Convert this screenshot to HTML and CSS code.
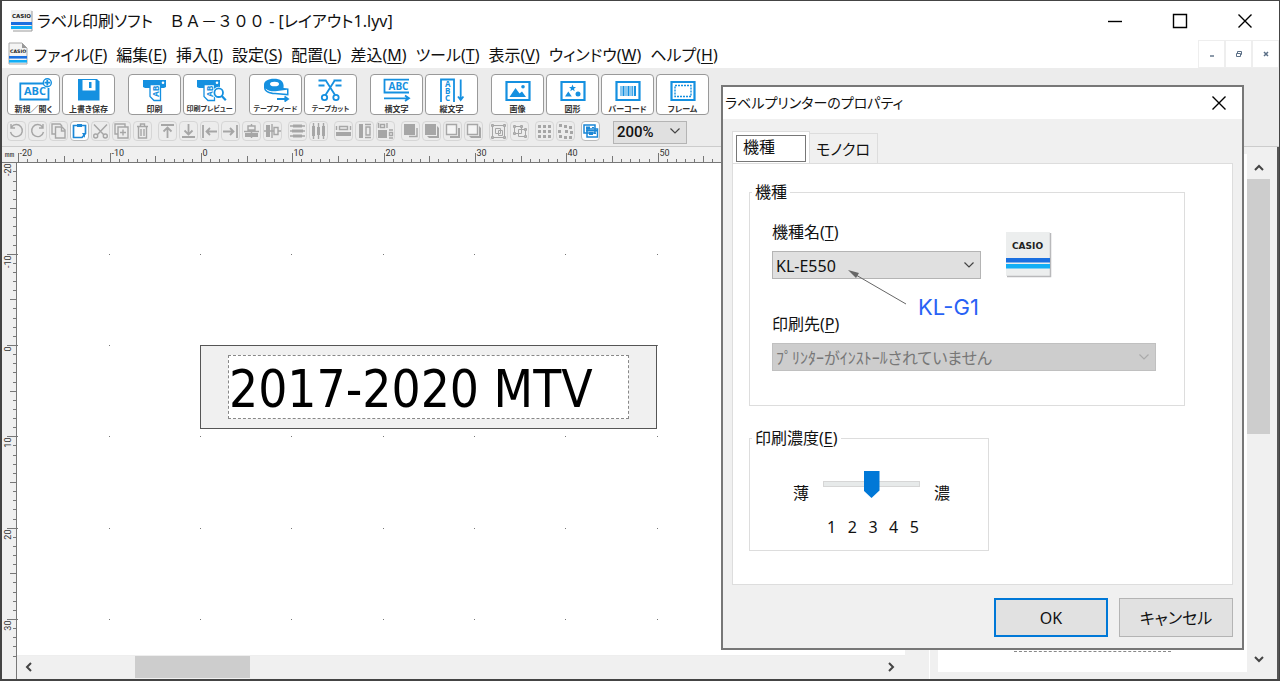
FILE: index.html
```html
<!DOCTYPE html>
<html lang="ja">
<head>
<meta charset="utf-8">
<title>ラベル印刷ソフト</title>
<link rel="stylesheet" href="styles.css">
</head>
<body>
<div class="window">
  <header class="titlebar">
    <svg class="app-icon" width="22" height="22" viewBox="0 0 22 22"><path d="M0 0h21v20H0z" fill="#f1f2f2"/><path d="M21 1v20H2" fill="none" stroke="#999"/><text x="1" y="8" class="logo-text" font-size="5.500">CASIO</text><path d="M0 12h21v3H0z" fill="#1a6fe0"/><path d="M0 16h21v3H0z" fill="#12aef5"/></svg>
    <h1 class="title">ラベル印刷ソフト<span class="wide-text">　ＢＡ－３００</span> - [レイアウト1.lyv]</h1>
    <div class="window-controls">
      <button class="wc" aria-label="最小化"><svg width="16" height="16"><path d="M1 8.500h14" stroke="#000" stroke-width="1.400"/></svg></button>
      <button class="wc" aria-label="最大化"><svg width="16" height="16"><path d="M1.500 1.500h13v13h-13z" fill="none" stroke="#000" stroke-width="1.400"/></svg></button>
      <button class="wc" aria-label="閉じる"><svg width="16" height="16"><path d="M1.500 1.500l13 13M14.500 1.500l-13 13" stroke="#000" stroke-width="1.400"/></svg></button>
    </div>
  </header>

  <nav class="menubar">
    <svg class="doc-icon" width="20" height="24" viewBox="0 0 20 24"><path d="M1 1h13l5 5v16H1z" fill="#f4f4f4" stroke="#aaa"/><path d="M14 1v5h5z" fill="#999"/><text x="2" y="11" class="logo-text" font-size="4.700">CASIO</text><path d="M1 14h18v2.600H1z" fill="#1a6fe0"/><path d="M1 18h18v2.600H1z" fill="#12aef5"/></svg>
    <button class="menu">ファイル(<u>F</u>)</button>
    <button class="menu">編集(<u>E</u>)</button>
    <button class="menu">挿入(<u>I</u>)</button>
    <button class="menu">設定(<u>S</u>)</button>
    <button class="menu">配置(<u>L</u>)</button>
    <button class="menu">差込(<u>M</u>)</button>
    <button class="menu">ツール(<u>T</u>)</button>
    <button class="menu">表示(<u>V</u>)</button>
    <button class="menu">ウィンドウ(<u>W</u>)</button>
    <button class="menu">ヘルプ(<u>H</u>)</button>
    <div class="mdi-controls">
      <button class="mdi" aria-label="最小化"><svg width="8" height="8"><path d="M2 6h4" stroke="#5b6f86" stroke-width="1.400"/></svg></button>
      <button class="mdi" aria-label="元に戻す"><svg width="8" height="8"><path d="M2.500 3V1.500h4v3H5M1.500 3.500h4v3h-4z" fill="none" stroke="#5b6f86"/></svg></button>
      <button class="mdi" aria-label="閉じる"><svg width="8" height="8"><path d="M2 2l4 4M6 2L2 6" stroke="#5b6f86" stroke-width="1.500"/></svg></button>
    </div>
  </nav>

  <div class="toolbars">
    <div class="toolbar">
      <div class="tools">
        <button class="tool"><svg width="51" height="27" viewBox="1 1 51 27"><path d="M36 9.500H13.300v16H41.500V14" class="line"/><text x="17" y="21" font-size="11" class="icon-text">ABC</text><circle cx="40.300" cy="8.700" r="4" class="line thin"/><path d="M37.500 8.700h5.600M40.300 5.900v5.600" class="line"/></svg><span>新規／開く</span></button>
        <button class="tool"><svg width="51" height="27" viewBox="1 1 51 27"><path d="M16 5h19l2.500 2.500v19H16z" class="fill"/><path d="M20.500 6h13v10.500h-13z" fill="#fff"/><path d="M27 8h2.500v6H27z" class="fill"/></svg><span>上書き保存</span></button>
      </div>
      <div class="tools">
        <button class="tool"><svg width="51" height="27" viewBox="1 1 51 27"><path d="M15 6h23v7l-2 1H17l-2-1z" class="fill"/><circle cx="35" cy="8.700" r="1.300" fill="#fff"/><path d="M22 10.500h10.500v16H26l-4-4z" class="paper"/><text transform="translate(30.500 23) rotate(-90)" font-size="8.500" class="icon-text">AB</text></svg><span>印刷</span></button>
        <button class="tool"><svg width="51" height="27" viewBox="1 1 51 27"><path d="M14 6h23v7l-2 1H16l-2-1z" class="fill"/><circle cx="34" cy="8.700" r="1.300" fill="#fff"/><path d="M21 10.500h10.500v16H25l-4-4z" class="paper"/><text transform="translate(29.500 23) rotate(-90)" font-size="8.500" class="icon-text">AB</text><circle cx="35.700" cy="18.700" r="6" fill="#fff"/><circle cx="35.700" cy="18.700" r="4.300" class="line"/><path d="M38.800 22l4 4.200" class="line frame"/></svg><span class="long">印刷プレビュー</span></button>
      </div>
      <div class="tools">
        <button class="tool"><svg width="51" height="27" viewBox="1 1 51 27"><path d="M25 4.700c-6 0-10 2.500-10 6v3c0 4 5 6.500 11 6.500l13.500 1.300v-7l-5-.5c1-7-3.500-9.300-9.500-9.300z" class="fill"/><path d="M16.500 14.500c2.500 2.500 7 3 10 2.700l11.500-1.400v4l-12-1c-5-.3-8.500-1.800-9.500-4.300z" fill="#fff"/><ellipse cx="25.500" cy="10" rx="4.500" ry="2.300" fill="#fff"/><path d="M28 25h10M35.500 22.500l3.500 2.500-3.500 2.500" class="line"/></svg><span class="long">テープフィード</span></button>
        <button class="tool"><svg width="51" height="27" viewBox="1 1 51 27"><path d="M14.500 6.500h8M29.500 6.500h8M14.500 11.500h6M31.500 11.500h6M21.500 6L31 21M31 6L21.500 21" class="line"/><circle cx="20.500" cy="23.500" r="2.700" class="line"/><circle cx="32" cy="23.500" r="2.700" class="line"/></svg><span class="long">テープカット</span></button>
      </div>
      <div class="tools">
        <button class="tool"><svg width="51" height="27" viewBox="1 1 51 27"><path d="M39 5.700H14.500v12.800H39" class="line"/><text x="18.500" y="15.500" font-size="10" class="icon-text">ABC</text><path d="M14 24.300h24M35 21.500l4 2.800-4 2.800" class="line"/></svg><span>横文字</span></button>
        <button class="tool"><svg width="51" height="27" viewBox="1 1 51 27"><path d="M16 28V5.500h13V28" class="line"/><text x="20" y="13" font-size="8" class="icon-text">A</text><text x="20" y="20" font-size="8" class="icon-text">B</text><text x="20" y="27" font-size="8" class="icon-text">C</text><path d="M35.700 5.500V25M33 22.500l2.700 3.500 2.700-3.500" class="line"/></svg><span>縦文字</span></button>
      </div>
      <div class="tools">
        <button class="tool"><svg width="51" height="27" viewBox="1 1 51 27"><path d="M15.500 8h23v18h-23z" class="line frame"/><path d="M18.500 23l6-9 4 5.500 2.500-2 4 5.500z" class="fill"/><circle cx="32" cy="12.700" r="1.800" class="fill"/></svg><span>画像</span></button>
        <button class="tool"><svg width="51" height="27" viewBox="1 1 51 27"><path d="M15.500 8h23v18h-23z" class="line frame"/><path d="M26.500 10.500l1 2.400 2.500.2-2 1.600.7 2.500-2.200-1.400-2.200 1.400.7-2.500-2-1.600 2.500-.2zM19 22.500l3.300-5 3.500 5z" class="fill"/><circle cx="32" cy="20" r="2.500" class="fill"/></svg><span>図形</span></button>
        <button class="tool"><svg width="51" height="27" viewBox="1 1 51 27"><path d="M15.500 8h23v18h-23z" class="line frame"/><path d="M19.500 12h1v10h-1zM21.500 12h2v10h-2zM24.500 12h1v10h-1zM26.500 12h2v10h-2zM29.500 12h1v10h-1zM31.200 12h1v10h-1zM33 12h2v10h-2z" class="fill"/></svg><span>バーコード</span></button>
        <button class="tool"><svg width="51" height="27" viewBox="1 1 51 27"><path d="M15.500 8h23v18h-23z" class="line frame"/><path d="M19 11.500h16v11H19z" class="line thin" stroke-dasharray="2 1"/></svg><span>フレーム</span></button>
      </div>
    </div>

    <div class="toolbar small">
      <div class="tools">
        <button class="mini" aria-label="元に戻す"><svg viewBox="0 0 19 20"><path d="M4.500 6A6 6 0 1 1 3.500 11M4 3v4h4" class="g"/></svg></button>
        <button class="mini" aria-label="やり直し"><svg viewBox="0 0 19 20"><path d="M14.500 6A6 6 0 1 0 15.500 11M15 3v4h-4" class="g"/></svg></button>
        <button class="mini" aria-label="コピー"><svg viewBox="0 0 19 20"><path d="M6 13H3V3h8l2 2M6.500 6H13l3 3v8H6.500z" class="g"/><path d="M12.500 6v4H16" class="g"/></svg></button>
        <button class="mini on" aria-label="貼り付け"><svg viewBox="0 0 19 20"><path d="M3.500 4.500h12v8l-3.500 4H3.500z" fill="#fff" stroke="#1b87d6" stroke-width="1.700"/><path d="M7 3h5v3H7zM12 12h3v5z" fill="#1b87d6"/></svg></button>
        <button class="mini" aria-label="切り取り"><svg viewBox="0 0 19 20"><path d="M3 3.500L13 14M16 3.500L6 14" class="g"/><circle cx="4.700" cy="15" r="2" class="g"/><circle cx="14.300" cy="15" r="2" class="g"/></svg></button>
        <button class="mini" aria-label="複製"><svg viewBox="0 0 19 20"><path d="M6 13H3V3h10v3M6 6h10v11H6zM8 11.500h6M11 8.500v6" class="g"/></svg></button>
        <button class="mini" aria-label="削除"><svg viewBox="0 0 19 20"><path d="M4 5.500h11M7.500 5V3h4v2M5.500 6v11h8V6M8 8v7M11 8v7" class="g"/></svg></button>
      </div>
      <div class="tools">
        <button class="mini" aria-label="上揃え"><svg viewBox="0 0 19 20"><path d="M3 4h13M9.500 17V7.500M5.500 10.500l4-4 4 4" class="g b"/></svg></button>
        <button class="mini" aria-label="下揃え"><svg viewBox="0 0 19 20"><path d="M3 16h13M9.500 3v9.500M5.500 9.500l4 4 4-4" class="g b"/></svg></button>
        <button class="mini" aria-label="左揃え"><svg viewBox="0 0 19 20"><path d="M3 4v13M17 10.500H7M10 7l-3.500 3.500L10 14" class="g b"/></svg></button>
        <button class="mini" aria-label="右揃え"><svg viewBox="0 0 19 20"><path d="M16 4v13M2 10.500h10M9 7l3.500 3.500L9 14" class="g b"/></svg></button>
        <button class="mini" aria-label="左右中央"><svg viewBox="0 0 19 20"><path d="M6 5h7v4H6zM2 10.500h15M9.500 3v2M9.500 9v8" class="g"/><path d="M3 12h13v4H3z" class="s"/></svg></button>
        <button class="mini" aria-label="上下中央"><svg viewBox="0 0 19 20"><path d="M11 6.500h4v7h-4zM9 3v14M1 10h10M15 10h3" class="g"/><path d="M3 4h4v12H3z" class="s"/></svg></button>
      </div>
      <div class="tools">
        <button class="mini" aria-label="上下等間隔"><svg viewBox="0 0 19 20"><path d="M2 5h15M2 10h15M2 15h15" class="g"/><path d="M5 3.500h9v3H5zM4 8.500h11v3H4zM5 13.500h9v3H5z" class="s"/></svg></button>
        <button class="mini" aria-label="左右等間隔"><svg viewBox="0 0 19 20"><path d="M4.500 2v16M9.500 2v16M14.500 2v16" class="g"/><path d="M3 5h3v10H3zM8 6h3v8H8zM13 5h3v10h-3z" class="s"/></svg></button>
      </div>
      <div class="tools">
        <button class="mini" aria-label="幅を揃える"><svg viewBox="0 0 19 20"><path d="M5.500 5.500h8v3h-8zM2.500 5v4M16.500 5v4" class="g"/><path d="M2 11h15v4H2z" class="s"/></svg></button>
        <button class="mini" aria-label="高さを揃える"><svg viewBox="0 0 19 20"><path d="M11 6h4v8h-4zM10 3.500h6M10 16.500h6" class="g"/><path d="M4 3h4v14H4z" class="s"/></svg></button>
        <button class="mini" aria-label="サイズを揃える"><svg viewBox="0 0 19 20"><path d="M4.500 3.500h4v3h-4zM13.500 11.500h3v3h-3zM2.500 2v5M11 2v5M13 9h4M13 17h4" class="g"/><path d="M2 9h9v8H2z" class="s"/></svg></button>
      </div>
      <div class="tools">
        <button class="mini" aria-label="最前面"><svg viewBox="0 0 19 20"><path d="M8 15.500h8V7" class="g"/><path d="M3 3h11v11H3z" class="s"/></svg></button>
        <button class="mini" aria-label="前面"><svg viewBox="0 0 19 20"><path d="M3 3h11v11H3zM5 15h10V5l2 2v10H7z" class="s"/></svg></button>
        <button class="mini" aria-label="背面"><svg viewBox="0 0 19 20"><path d="M7 15h8V7h2v10H7z" class="s"/><path d="M3.500 3.500h10v10h-10z" class="g w"/></svg></button>
        <button class="mini" aria-label="最背面"><svg viewBox="0 0 19 20"><path d="M5 15h10V5l2 2v10H7z" class="s"/><path d="M3.500 3.500h10v10h-10z" class="g w"/></svg></button>
      </div>
      <div class="tools">
        <button class="mini" aria-label="グループ化"><svg viewBox="0 0 19 20"><path d="M3.500 4.500h12v12h-12zM6.500 7.500h5v5h-5zM9.500 9.500h4v5h-4zM2.500 3.500h2v2h-2zM14.500 3.500h2v2h-2zM2.500 15.500h2v2h-2zM14.500 15.500h2v2h-2z" class="g t"/></svg></button>
        <button class="mini" aria-label="グループ解除"><svg viewBox="0 0 19 20"><path d="M4.500 5.500h7v7h-7zM8.500 8.500h7v7h-7zM3.500 4.500h2v2h-2zM10.500 4.500h2v2h-2zM3.500 11.500h2v2h-2zM14.500 7.500h2v2h-2zM14.500 14.500h2v2h-2z" class="g t"/></svg></button>
      </div>
      <div class="tools">
        <button class="mini" aria-label="グリッド"><svg viewBox="0 0 19 20"><path d="M3 4h3v3H3zM8 4h3v3H8zM13 4h3v3h-3zM3 9h3v3H3zM8 9h3v3H8zM13 9h3v3h-3zM3 14h3v3H3zM8 14h3v3H8zM13 14h3v3h-3z" class="s"/></svg></button>
        <button class="mini" aria-label="グリッドに合わせる"><svg viewBox="0 0 19 20"><path d="M3 3h3v3H3zM8 4h3v3H8zM13 5h3v3h-3zM2 9h3v3H2zM9 9h3v3H9zM14 10h3v3h-3zM3 14h3v3H3zM8 15h3v3H8zM13 15h3v3h-3z" class="s"/></svg></button>
      </div>
      <div class="tools">
        <button class="mini on" aria-label="プレビュー"><svg viewBox="0 0 19 20"><path d="M3 4h11v8H3zM6 8h10.500v8H6z" fill="#fff" stroke="#1b87d6" stroke-width="1.500"/><path d="M5 5.500h4v3H5zM11 6h2v1h-2zM8 11h4v3H8zM13 12h2v1h-2zM5 9h11v1.500H5z" fill="#1b87d6"/></svg></button>
      </div>
      <div class="combo zoom"><select aria-label="倍率"><option>200%</option></select><svg width="10" height="6"><path d="M.5.5L5 5 9.500.5" class="chev"/></svg></div>
    </div>
  </div>

  <main class="workspace">
    <section class="editor">
      <div class="corner">mm</div>
      <svg class="ruler-h" id="rulerH"></svg>
      <svg class="ruler-v" id="rulerV"></svg>
      <div class="canvas">
        <svg class="dots" id="dots"></svg>
        <div class="tape"><div class="tape-text">2017-2020 MTV</div></div>
      </div>
      <div class="scroll-h">
        <svg width="8" height="10"><path d="M6 1L2 5l4 4" class="arrow"/></svg>
        <div class="track-h"><div class="thumb-h"></div></div>
        <svg width="8" height="10"><path d="M2 1l4 4-4 4" class="arrow"/></svg>
      </div>
    </section>
    <aside class="preview">
      <div class="preview-page"><div class="preview-line"></div></div>
      <div class="scroll-v">
        <svg width="10" height="8"><path d="M1 6l4-4 4 4" class="arrow"/></svg>
        <div class="track-v"><div class="thumb-v"></div></div>
        <svg width="10" height="8"><path d="M1 2l4 4 4-4" class="arrow"/></svg>
      </div>
    </aside>
  </main>
</div>

<div class="dialog" role="dialog" aria-labelledby="dlgTitle">
  <div class="dialog-title">
    <h2 id="dlgTitle">ラベルプリンターのプロパティ</h2>
    <button class="dialog-close" aria-label="閉じる"><svg width="16" height="16"><path d="M1.500 1.500l13 13M14.500 1.500l-13 13" stroke="#000" stroke-width="1.400"/></svg></button>
  </div>
  <div class="dialog-body">
    <div class="tabs" role="tablist">
      <button class="tab active" role="tab" aria-selected="true"><span>機種</span></button>
      <button class="tab" role="tab" aria-selected="false">モノクロ</button>
    </div>
    <div class="panel">
      <fieldset class="group model">
        <legend>機種</legend>
        <div class="model-row">
          <div class="field">
            <label for="model">機種名(<u>T</u>)</label>
            <div class="combo"><select id="model"><option>KL-E550</option></select><svg width="10" height="6"><path d="M.5.5L5 5 9.500.5" class="chev"/></svg></div>
          </div>
          <svg class="brand" width="46" height="46" viewBox="0 0 46 46"><path d="M0 0h44v44H0z" fill="#eceeee"/><path d="M44.500 1v43.500H1" fill="none" stroke="#b9b9bb" stroke-width="1.500"/><text x="6" y="17" class="logo-text" font-size="9">CASIO</text><path d="M0 26h44v4.500H0z" fill="#1a6fe0"/><path d="M0 32h44v4.500H0z" fill="#12aef5"/></svg>
        </div>
        <div class="field">
          <label for="port">印刷先(<u>P</u>)</label>
          <div class="combo wide"><select id="port" disabled><option>ﾌﾟﾘﾝﾀｰがｲﾝｽﾄｰﾙされていません</option></select><svg width="10" height="6"><path d="M.5.5L5 5 9.500.5" class="chev off"/></svg></div>
        </div>
      </fieldset>
      <fieldset class="group density">
        <legend>印刷濃度(<u>E</u>)</legend>
        <div class="density-row">
          <label for="density">薄</label>
          <input id="density" type="range" min="1" max="5" value="3">
          <span>濃</span>
        </div>
        <div class="scale"><span>1</span><span>2</span><span>3</span><span>4</span><span>5</span></div>
      </fieldset>
    </div>
    <div class="actions">
      <button class="btn primary">OK</button>
      <button class="btn">キャンセル</button>
    </div>
  </div>
  <div class="note">
    <svg width="60" height="36"><path d="M58 34L8 5" stroke="#666"/><path d="M0 0l11 3-3 5z" fill="#666"/></svg>
    <span>KL-G1</span>
  </div>
</div>
<script src="rulers.js"></script>
</body>
</html>
```

FILE: styles.css
```css
* { box-sizing: border-box; }
body {
  margin: 0;
  height: 100vh;
  overflow: hidden;
  position: relative;
  color: #111;
  font: 16px/24px "Noto Sans", "Noto Sans CJK JP", sans-serif;
  font-feature-settings: "palt";
}
button, select { font: inherit; font-feature-settings: inherit; color: inherit; border-radius: 0; }
svg { display: block; flex: none; }

.window {
  height: 100%;
  display: flex;
  flex-direction: column;
  background: #fff;
  border: 1px solid #444;
  border-width: 1px 1px 2px 2px;
}
.titlebar { display: flex; align-items: center; height: 39px; padding-left: 9px; }
.title { margin: 0 0 0 4px; font-size: 16px; font-weight: 400; white-space: pre; }
.wide-text { font-feature-settings: normal; }
.window-controls { display: flex; margin-left: auto; padding-right: 2px; }
.wc { width: 65px; height: 39px; display: grid; place-items: center; border: 0; padding: 0; background: none; }
.logo-text { font-family: "DejaVu Sans", sans-serif; font-weight: 700; fill: #222; }

.menubar { display: flex; align-items: center; height: 28px; padding-left: 6px; }
.doc-icon { margin-right: 2px; }
.menu { border: 0; background: none; padding: 2px 5px 0 4px; white-space: nowrap; }
u { text-underline-offset: 2px; text-decoration-thickness: 1px; }
.mdi-controls { display: flex; margin-left: auto; height: 28px; }
.mdi { width: 27px; display: grid; place-items: center; padding: 0; background: #fff; border: 1px solid #eee; }

.toolbars { background: #ececec; border-bottom: 1px solid #ccc; height: 79px; padding: 6px 5px 0; }
.toolbar { display: flex; gap: 13px; }
.tools { display: flex; gap: 2px; }
.tool {
  width: 53px;
  height: 41px;
  padding: 0;
  display: flex;
  flex-direction: column;
  align-items: center;
  background: #fff;
  border: 1px solid #999;
  border-radius: 4px;
  font-size: 8px;
  font-weight: 700;
  line-height: 13px;
  color: #333;
  white-space: nowrap;
}
.long { font-size: 7px; }
.line { fill: none; stroke: #1590e0; stroke-width: 1.8; }
.line.thin { stroke-width: 1.4; }
.line.frame { stroke-width: 2.2; }
.paper { fill: #fff; stroke: #1590e0; stroke-width: 1.3; }
.fill, .icon-text { fill: #1590e0; }
.icon-text { font-family: "Open Sans", sans-serif; font-weight: 700; }

.toolbar.small { gap: 6px; margin-top: 4px; align-items: center; }
.mini { width: 19px; height: 20px; padding: 0; border: 1px solid #d6d6d6; border-radius: 4px; background: #ececec; display: flex; align-items: center; justify-content: center; }
.mini svg { width: 19px; height: 20px; }
.mini.on { background: #fff; border-color: #bbb; }
.g { fill: none; stroke: #a6a6a6; stroke-width: 1.4; }
.g.b { stroke-width: 1.8; }
.g.t { stroke-width: 1; }
.g.w { fill: #f4f4f4; }
.s { fill: #a6a6a6; }

.combo { position: relative; width: 209px; height: 28px; }
.combo select {
  appearance: none;
  width: 100%;
  height: 100%;
  padding: 1px 3px 0;
  border: 1px solid #b4b4b4;
  background: #e0e0e0;
  opacity: 1;
}
.combo svg { position: absolute; right: 7px; top: 50%; margin-top: -3px; pointer-events: none; }
.combo select:disabled { background: #cdcdcd; border-color: #c0c0c0; color: #777; }
.combo.wide { width: 384px; }
.combo.zoom { width: 74px; height: 23px; margin-left: 7px; }
.combo.zoom select { font: 500 15px/20px Roboto, sans-serif; padding: 0 3px; }
.chev { fill: none; stroke: #444; stroke-width: 1.2; }
.chev.off { stroke: #aaa; }

.workspace { flex: 1; min-height: 0; display: flex; background: #f0f0f0; border-right: 2px solid #555; }
.editor {
  flex: 1;
  min-width: 0;
  display: grid;
  grid-template-columns: 15px 1fr;
  grid-template-rows: 16px 1fr 24px;
  margin-right: 24px;
}
.corner { font: 8px/15px "Liberation Mono", monospace; color: #333; text-align: center; border-bottom: 1px solid #777; }
.ruler-h { width: 100%; height: 16px; border-bottom: 1px solid #777; }
.ruler-v { width: 15px; height: 100%; border-right: 1px solid #777; grid-row: 2 / 4; }
.ruler-h line, .ruler-v line { stroke: #777; }
.ruler-h text, .ruler-v text { font: 9px Roboto, sans-serif; fill: #333; }
.canvas { position: relative; background: #fff; overflow: hidden; }
.dots { width: 100%; height: 100%; }
.tape {
  position: absolute;
  left: 183px;
  top: 182px;
  width: 457px;
  height: 84px;
  padding: 9px 27px;
  background: #f0f0f0;
  border: 1px solid #555;
}
.tape-text {
  height: 64px;
  border: 1px dashed #888;
  background: #fff;
  color: #000;
  font: 51px/68px "DejaVu Sans Condensed", "DejaVu Sans", sans-serif;
  white-space: nowrap;
}
.scroll-h { grid-column: 2; display: flex; align-items: center; padding: 0 10px 2px 8px; gap: 8px; border-top: 1px solid #eee; }
.track-h { flex: 1; height: 100%; padding-left: 94px; }
.thumb-h { width: 115px; height: 22px; background: #cdcdcd; }
.arrow { fill: none; stroke: #444; stroke-width: 2; }

.preview { width: 348px; display: flex; border-left: 1px solid #fff; padding-left: 8px; }
.preview-page { flex: 1; margin: 7px 0; background: #fff; display: flex; flex-direction: column; justify-content: flex-end; align-items: center; padding-bottom: 20px; }
.preview-line { width: 157px; border-top: 1px dashed #888; }
.scroll-v { width: 23px; margin-right: 7px; display: flex; flex-direction: column; align-items: center; padding: 17px 0 16px; }
.track-v { flex: 1; width: 100%; padding-top: 7px; }
.thumb-v { height: 255px; background: #cdcdcd; }

.dialog {
  position: absolute;
  right: 36px;
  top: 85px;
  width: 523px;
  border: 2px solid #777;
  background: #f0f0f0;
}
.dialog-title { display: flex; align-items: center; justify-content: space-between; height: 32px; background: #fff; padding: 0 15px 0 2px; }
.dialog-title h2 { margin: 0; font-size: 14px; font-weight: 400; }
.dialog-close { border: 0; background: none; padding: 0; }
.dialog-body { padding: 12px 9px 11px; }
.tabs { display: flex; align-items: flex-end; }
.tab { width: 68px; height: 30px; padding: 0 0 0 6px; border: 1px solid #ddd; border-width: 1px 1px 0 0; background: #f0f0f0; font-size: 15px; text-align: left; }
.tab.active { width: 78px; height: 32px; padding: 3px; background: #fff; border-left-width: 1px; font-size: 16px; }
.tab.active span { display: block; height: 27px; line-height: 23px; padding-left: 6px; border: 1px solid #777; }
.panel { background: #fff; border: 1px solid #ddd; padding: 15px 16px 33px; }
.group { margin: 0; border: 1px solid #ddd; min-width: 0; }
.group legend { padding: 0 3px; line-height: 26px; }
.field { display: flex; flex-direction: column; gap: 8px; }
.field label { line-height: 22px; }
.model { width: 436px; padding: 16px 22px 34px; }
.model legend { margin-left: -20px; }
.model-row { display: flex; gap: 25px; align-items: flex-end; margin-bottom: 34px; }
.brand { margin-bottom: 1px; }
.density { width: 240px; margin-top: 19px; padding: 18px 38px 11px 43px; }
.density legend { margin-left: -41px; }
.density-row { display: flex; justify-content: space-between; align-items: flex-end; height: 36px; }
.density-row input { appearance: none; width: 97px; height: 28px; margin: 0 0 7px; background: none; }
.density-row input::-webkit-slider-runnable-track { height: 6px; background: #e7eaea; border: 1px solid #d6d6d6; }
.density-row input::-webkit-slider-thumb { appearance: none; width: 16px; height: 27px; margin-top: -11px; background: #0078d7; clip-path: polygon(0 0, 100% 0, 100% 72%, 50% 100%, 0 72%); }
.scale { display: flex; justify-content: space-between; width: 92px; margin: 10px 0 0 34px; }
.actions { display: flex; justify-content: flex-end; gap: 11px; margin-top: 13px; }
.btn { width: 114px; height: 39px; border: 1px solid #b4b4b4; background: #e1e1e1; padding: 0; }
.btn.primary { border: 2px solid #0078d7; }
.note { position: absolute; left: 125px; top: 183px; pointer-events: none; color: #2962f5; font: 22px/24px Inter, sans-serif; }
.note span { position: absolute; left: 70px; top: 25px; white-space: nowrap; }
```

FILE: rulers.js
```js
const NS = "http://www.w3.org/2000/svg";
const MM = 9.133;      // pixels per millimetre at 200%
const ZERO_X = 184;    // ruler origin inside the canvas
const ZERO_Y = 182;

function add(parent, name, attrs, text) {
  const el = document.createElementNS(NS, name);
  for (const key in attrs) el.setAttribute(key, attrs[key]);
  if (text !== undefined) el.textContent = text;
  parent.appendChild(el);
}

function tickLength(mm) {
  if (mm % 10 === 0) return 9;
  return mm % 5 === 0 ? 6 : 3;
}

const h = document.getElementById("rulerH");
const v = document.getElementById("rulerV");
const dots = document.getElementById("dots");

for (let mm = -20; mm < 60; mm++) {
  const x = Math.round(ZERO_X + mm * MM) + 0.5;
  add(h, "line", { x1: x, x2: x, y1: 15 - tickLength(mm), y2: 15 });
  if (mm % 10 === 0) add(h, "text", { x: x + 1, y: 9 }, mm);
}
for (let mm = -20; mm <= 34; mm++) {
  const y = Math.round(ZERO_Y + mm * MM) + 0.5;
  add(v, "line", { x1: 14 - tickLength(mm), x2: 14, y1: y, y2: y });
  if (mm % 10 === 0) {
    add(v, "text", { transform: `translate(9 ${y + 1}) rotate(-90)`, "text-anchor": "end" }, mm);
  }
}
for (let r = -2; r <= 3; r++) {
  for (let c = -2; c <= 8; c++) {
    add(dots, "rect", {
      x: Math.round(ZERO_X + c * 10 * MM) - 1,
      y: Math.round(ZERO_Y + r * 10 * MM),
      width: 1, height: 1, fill: "#777"
    });
  }
}
```
